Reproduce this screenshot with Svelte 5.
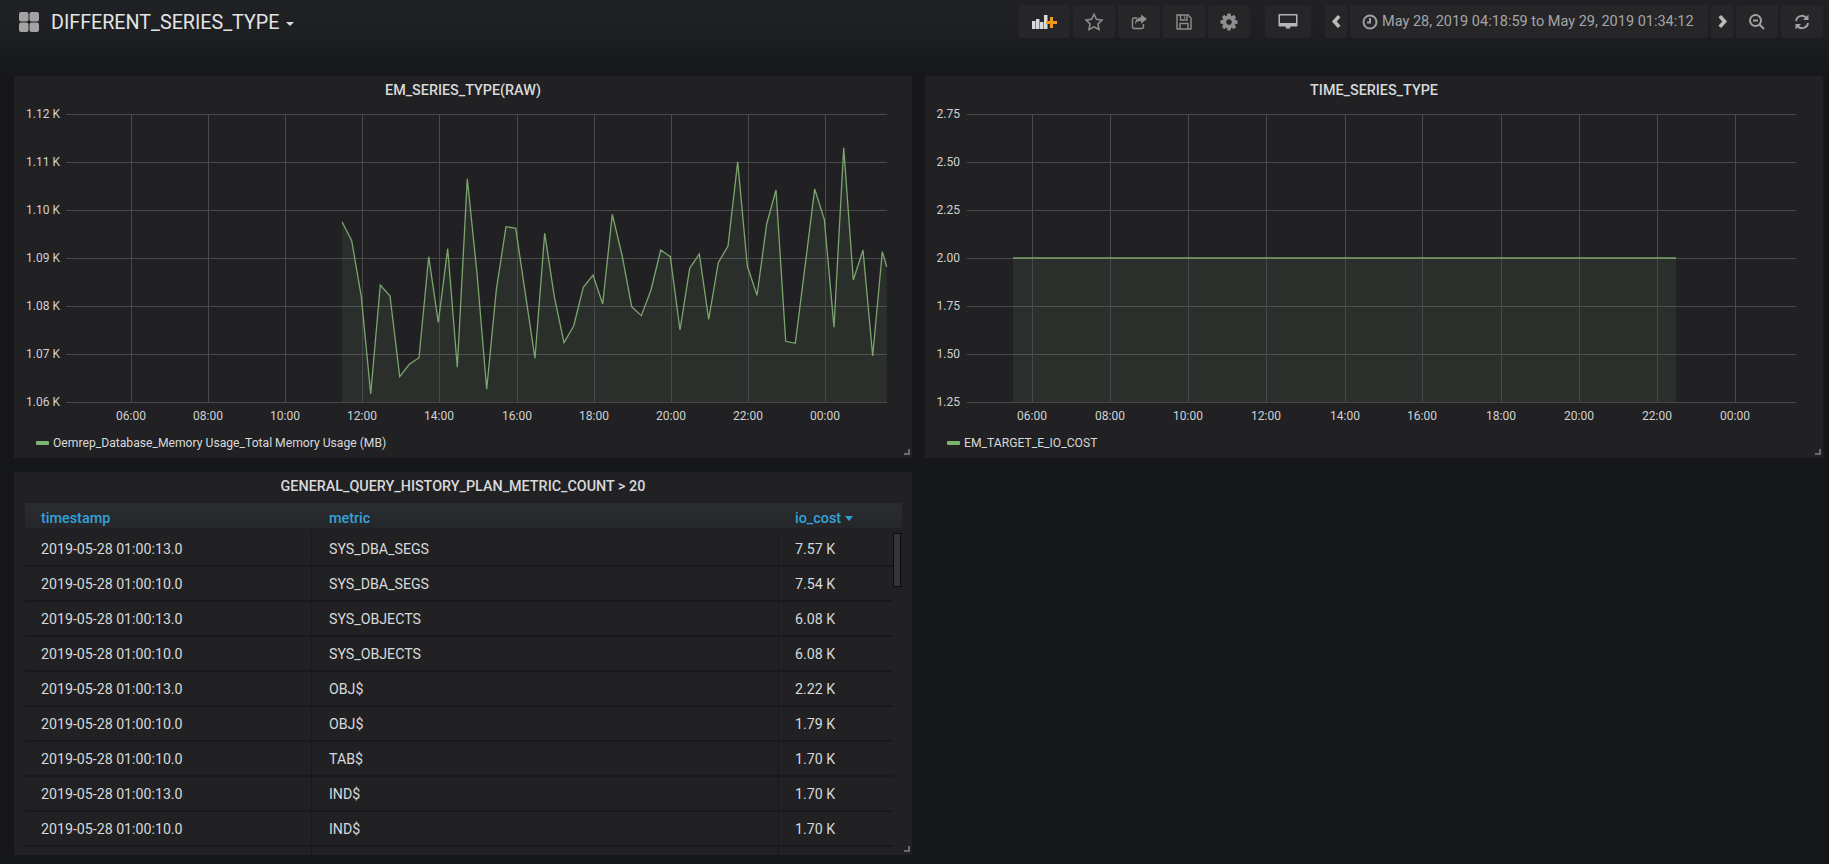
<script lang="ts">
  // chart 1 points, read off the picture as [x, y] in page pixels
  const memZoomA = [[1026,365],[1055,422],[1084,590],[1112,882],[1141,555],[1170,588],[1199,830],[1228,793],[1257,773],[1286,470],[1315,667],[1343,446],[1372,802],[1402,236]];
  const memZoomB = [[21,520],[50,868],[79,570],[108,380],[137,385],[166,580],[195,775],[224,400],[253,590],[282,728],[311,678],[340,562],[369,525],[398,612],[427,343],[456,465],[485,620],[514,647],[543,570],[572,450],[601,470],[630,690],[659,505],[688,462],[716,658],[745,488],[774,438],[803,185],[832,498],[861,586],[890,372],[918,270],[947,724],[976,730],[1005,500],[1034,267],[1063,358],[1092,682],[1121,143],[1150,540],[1179,450],[1208,768],[1237,455],[1250,500]];

  const memSeries = [
    ...memZoomA.map(([x, y]) => [x / 3, 100 + y / 3]),
    ...memZoomB.map(([x, y]) => [470 + x / 3, 100 + y / 3])
  ];

  const hours = ['06:00', '08:00', '10:00', '12:00', '14:00', '16:00', '18:00', '20:00', '22:00', '00:00'];

  const charts = [
    {
      title: 'EM_SERIES_TYPE(RAW)',
      legend: 'Oemrep_Database_Memory Usage_Total Memory Usage (MB)',
      left: 14,
      plotLeft: 66,
      plotRight: 887,
      labelX: 60,
      yLabels: ['1.12 K', '1.11 K', '1.10 K', '1.09 K', '1.08 K', '1.07 K', '1.06 K'],
      yLines: [114, 162, 210, 258, 306, 354, 402],
      xLines: [131, 208, 285, 362, 439, 517, 594, 671, 748, 825],
      points: memSeries
    },
    {
      title: 'TIME_SERIES_TYPE',
      legend: 'EM_TARGET_E_IO_COST',
      left: 925,
      plotLeft: 967,
      plotRight: 1796,
      labelX: 960,
      yLabels: ['2.75', '2.50', '2.25', '2.00', '1.75', '1.50', '1.25'],
      yLines: [114, 162, 210, 258, 306, 354, 402],
      xLines: [1032, 1110, 1188, 1266, 1345, 1422, 1501, 1579, 1657, 1735],
      points: [[1013, 258], [1676, 258]]
    }
  ];

  // svg sits 106px down the page, below the panel title
  const svgTop = 106;
  const line = (c) => c.points.map(([x, y]) => `${(x - c.left).toFixed(1)},${(y - svgTop).toFixed(1)}`).join(' ');
  const area = (c) => {
    const first = c.points[0][0] - c.left;
    const last = c.points[c.points.length - 1][0] - c.left;
    return `${first},${402 - svgTop} ${line(c)} ${last},${402 - svgTop}`;
  };

  const rows = [
    ['2019-05-28 01:00:13.0', 'SYS_DBA_SEGS', '7.57 K'],
    ['2019-05-28 01:00:10.0', 'SYS_DBA_SEGS', '7.54 K'],
    ['2019-05-28 01:00:13.0', 'SYS_OBJECTS', '6.08 K'],
    ['2019-05-28 01:00:10.0', 'SYS_OBJECTS', '6.08 K'],
    ['2019-05-28 01:00:13.0', 'OBJ$', '2.22 K'],
    ['2019-05-28 01:00:10.0', 'OBJ$', '1.79 K'],
    ['2019-05-28 01:00:10.0', 'TAB$', '1.70 K'],
    ['2019-05-28 01:00:13.0', 'IND$', '1.70 K'],
    ['2019-05-28 01:00:10.0', 'IND$', '1.70 K']
  ];
</script>

<div class="page">
  <header class="navbar">
    <div class="dash-title">
      <svg class="grid-icon" viewBox="0 0 20 20" width="20" height="20">
        <rect x="0" y="0" width="9.5" height="9.5" rx="2" />
        <rect x="10.5" y="0" width="9.5" height="9.5" rx="2" />
        <rect x="0" y="10.5" width="9.5" height="9.5" rx="2" />
        <rect x="10.5" y="10.5" width="9.5" height="9.5" rx="2" />
      </svg>
      <span>DIFFERENT_SERIES_TYPE</span>
      <i class="caret"></i>
    </div>

    <div class="actions">
      <button class="btn add">
        <svg viewBox="0 0 28 16" width="28" height="16">
          <path fill="#d8d9da" d="M1 7h3.500v8H1zM5 5h3.500v10H5zM9 8h3.500v7H9zM13 1h3.500v14H13z" />
          <path fill="#f09a24" d="M19 3h3v4h4v3h-4v4h-3v-4h-4V7h4z" />
        </svg>
      </button>
      <button class="btn">
        <svg viewBox="0 0 18 18" width="20" height="20" class="stroke">
          <path d="M9 2l2.200 4.600 5 .7-3.600 3.500.9 5L9 13.400 4.500 15.800l.9-5L1.800 7.300l5-.7z" />
        </svg>
      </button>
      <button class="btn">
        <svg viewBox="0 0 18 18" width="18" height="18">
          <path class="stroke" d="M13.500 11v3a1.500 1.500 0 0 1-1.500 1.500H4A1.500 1.500 0 0 1 2.500 14V6.500A1.500 1.500 0 0 1 4 5h3" />
          <path fill="#8e8e90" d="M11 1.500l6 4.600-6 4.600V8c-3 0-5 .8-6 3.500C5 7 7.500 4.500 11 4.300z" />
        </svg>
      </button>
      <button class="btn">
        <svg viewBox="0 0 18 18" width="18" height="18" class="stroke">
          <path d="M2 2h11l3 3v11H2z" />
          <path d="M5.500 2v5h6.500V2M9.500 3.500v2M5 16v-5.500h8V16" />
        </svg>
      </button>
      <button class="btn">
        <svg viewBox="0 0 1792 1792" width="20" height="20">
          <path fill="#8e8e90" d="M1152 896q0-106-75-181t-181-75-181 75-75 181 75 181 181 75 181-75 75-181zm512-109v222q0 12-8 23t-20 13l-185 28q-19 54-39 91 35 50 107 138 10 12 10 25t-9 23q-27 37-99 108t-94 71q-12 0-26-9l-138-108q-44 23-91 38-16 136-29 186-7 28-36 28h-222q-14 0-24.500-8.500t-11.500-21.500l-28-184q-49-16-90-37l-141 107q-10 9-25 9-14 0-25-11-126-114-165-168-7-10-7-23 0-12 8-23 15-21 51-66.500t54-70.500q-27-50-41-99l-183-27q-13-2-21-12.500t-8-23.500v-222q0-12 8-23t19-13l186-28q14-46 39-92-40-57-107-138-10-12-10-24 0-10 9-23 26-36 98.500-107.500t94.500-71.500q13 0 26 10l138 107q44-23 91-38 16-136 29-186 7-28 36-28h222q14 0 24.500 8.500t11.500 21.500l28 184q49 16 90 37l142-107q9-9 24-9 13 0 25 10 129 119 165 170 7 8 7 22 0 12-8 23-15 21-51 66.500t-54 70.500q26 50 41 98l183 28q13 2 21 12.500t8 23.500z" />
        </svg>
      </button>
      <button class="btn monitor">
        <svg viewBox="0 0 20 18" width="20" height="18">
          <path fill="#b4b5b6" fill-rule="evenodd" d="M1.500 1h17a1 1 0 0 1 1 1v10.500a1 1 0 0 1-1 1h-6L12 15.500H8l-.5-2h-6a1 1 0 0 1-1-1V2a1 1 0 0 1 1-1zM2 2.500V11h16V2.500z" />
          <path fill="#b4b5b6" d="M2 10h16v2H2z" />
        </svg>
      </button>
      <button class="btn arrow prev">
        <svg viewBox="0 0 10 14" width="11" height="15"><path class="chev" d="M7.500 2L3 7l4.500 5" /></svg>
      </button>
      <button class="btn range">
        <svg viewBox="0 0 16 16" width="16" height="16" class="stroke thick">
          <circle cx="8" cy="8" r="6.500" />
          <path d="M8 4v4.500H5" />
        </svg>
        <span>May 28, 2019 04:18:59 to May 29, 2019 01:34:12</span>
      </button>
      <button class="btn arrow next">
        <svg viewBox="0 0 10 14" width="11" height="15"><path class="chev" d="M2.500 2L7 7l-4.500 5" /></svg>
      </button>
      <button class="btn">
        <svg viewBox="0 0 18 18" width="18" height="18" class="stroke thick">
          <circle cx="7.500" cy="7.500" r="5.500" />
          <path d="M5 7.500h5M11.500 11.500L16 16" />
        </svg>
      </button>
      <button class="btn">
        <svg viewBox="0 0 18 18" width="18" height="18">
          <path class="stroke thick" d="M3 8a6 6 0 0 1 10.500-3M15 10a6 6 0 0 1-10.500 3" />
          <path fill="#a0a1a3" d="M15.500 1.500v5.500h-5.500zM2.500 16.500V11H8z" />
        </svg>
      </button>
    </div>
  </header>

  <main class="grid">
    {#each charts as c}
      <section class="panel">
        <h3>{c.title}</h3>
        <svg class="chart" width="898" height="325" viewBox="0 0 898 325">
          {#each c.yLines as y, i}
            <line class="grid-line" x1={c.plotLeft - c.left} x2={c.plotRight - c.left} y1={y - svgTop + 0.5} y2={y - svgTop + 0.5} />
            <text class="tick" x={c.labelX - c.left} y={y - svgTop + 4} text-anchor="end">{c.yLabels[i]}</text>
          {/each}
          <polygon class="fill" points={area(c)} />
          {#each c.xLines as x, i}
            <line class="grid-line" x1={x - c.left + 0.5} x2={x - c.left + 0.5} y1={114 - svgTop} y2={402 - svgTop} />
            <text class="tick" x={x - c.left} y={402 - svgTop + 18} text-anchor="middle">{hours[i]}</text>
          {/each}
          <polyline class="series" points={line(c)} />
        </svg>
        <div class="legend">
          <i class="swatch"></i>
          <span>{c.legend}</span>
        </div>
        <i class="resize"></i>
      </section>
    {/each}

    <section class="panel table-panel">
      <h3>GENERAL_QUERY_HISTORY_PLAN_METRIC_COUNT &gt; 20</h3>
      <div class="thead">
        <span class="col-a">timestamp</span>
        <span class="col-b">metric</span>
        <span class="col-c">io_cost <i class="sort"></i></span>
      </div>
      <div class="tbody">
        {#each rows as r}
          <div class="row">
            <span class="col-a">{r[0]}</span>
            <span class="col-b">{r[1]}</span>
            <span class="col-c">{r[2]}</span>
          </div>
        {/each}
        <div class="row stub">
          <span class="col-a"></span>
          <span class="col-b"></span>
          <span class="col-c"></span>
        </div>
        <i class="scrollbar"></i>
      </div>
      <i class="resize"></i>
    </section>
  </main>
</div>

<style>
  :global(body) {
    margin: 0;
    background: #161719;
  }

  .page {
    width: 1829px;
    height: 864px;
    overflow: hidden;
    font-family: Roboto, "Liberation Sans", sans-serif;
    color: #d8d9da;
    background: #161719;
  }

  .navbar {
    height: 76px;
    box-sizing: border-box;
    padding: 5px 6px 0 19px;
    display: flex;
    justify-content: space-between;
    align-items: flex-start;
    background: linear-gradient(to bottom, #202124 0, #1e1f22 30px, #17181b 66px);
  }

  .dash-title {
    display: flex;
    align-items: center;
    height: 33px;
    font-size: 19.7px;
    color: #e3e4e4;
  }

  .dash-title span {
    padding-top: 1px;
  }

  .grid-icon {
    fill: #a3a3a3;
    margin-right: 12px;
  }

  .caret {
    width: 0;
    height: 0;
    margin: 5px 0 0 7px;
    border-left: 4px solid transparent;
    border-right: 4px solid transparent;
    border-top: 4px solid #d8d9da;
  }

  .actions {
    display: flex;
    height: 33px;
    gap: 3px;
  }

  .btn {
    width: 42px;
    height: 33px;
    padding: 0;
    display: flex;
    align-items: center;
    justify-content: center;
    border: 0;
    border-radius: 2px;
    background: #262628;
    color: #a4a5a7;
    font: inherit;
    font-size: 14.5px;
  }

  .add {
    width: 51px;
  }

  .monitor {
    width: 46px;
    margin: 0 11px 0 12px;
  }

  .arrow {
    width: 22px;
  }

  .range {
    width: 358px;
    box-sizing: border-box;
    justify-content: flex-start;
    padding-left: 12px;
    gap: 4px;
  }

  .stroke {
    fill: none;
    stroke: #8e8e90;
    stroke-width: 1.4;
  }

  path.stroke {
    fill: none;
  }

  .thick {
    stroke: #a0a1a3;
    stroke-width: 2;
  }

  .chev {
    fill: none;
    stroke: #b9babb;
    stroke-width: 3.4;
  }

  .grid {
    display: grid;
    grid-template-columns: 898px 898px;
    grid-template-rows: 382px 383px;
    gap: 14px 13px;
    padding-left: 14px;
  }

  .panel {
    position: relative;
    background: #212124;
    overflow: hidden;
  }

  h3 {
    margin: 0;
    height: 30px;
    line-height: 29px;
    text-align: center;
    font-size: 14.35px;
    font-weight: 500;
    color: #d8d9da;
  }

  .chart {
    display: block;
  }

  .grid-line {
    stroke: #49494c;
    stroke-width: 1;
  }

  .tick {
    font-size: 12px;
    fill: #d0d1d2;
  }

  .fill {
    fill: rgba(126, 178, 109, 0.1);
  }

  .series {
    fill: none;
    stroke: #7ba56c;
    stroke-width: 1.3;
  }

  .legend {
    height: 27px;
    display: flex;
    align-items: flex-start;
    padding-left: 22px;
    font-size: 12.15px;
    line-height: 24px;
    color: #d8d9da;
  }

  .swatch {
    width: 13px;
    height: 4px;
    margin: 10px 4px 0 0;
    border-radius: 1px;
    background: #7eb26d;
  }

  .resize {
    position: absolute;
    right: 2px;
    bottom: 3px;
    width: 4px;
    height: 4px;
    border-right: 2px solid #6a6a6c;
    border-bottom: 2px solid #6a6a6c;
  }

  .table-panel h3 {
    height: 31px;
  }

  .thead {
    margin: 0 10px 0 11px;
    height: 25px;
    box-sizing: border-box;
    padding-top: 5px;
    display: flex;
    align-items: center;
    font-size: 14.4px;
    font-weight: 500;
    color: #33a2d6;
    background: linear-gradient(to bottom, #2b2c30, #252629);
  }

  .col-a {
    width: 287px;
    padding-left: 16px;
    box-sizing: border-box;
  }

  .col-b {
    width: 467px;
    padding-left: 17px;
    box-sizing: border-box;
  }

  .col-c {
    padding-left: 16px;
  }

  .sort {
    display: inline-block;
    vertical-align: 2px;
    border-left: 4px solid transparent;
    border-right: 4px solid transparent;
    border-top: 5px solid #33a2d6;
  }

  .tbody {
    position: relative;
    margin: 4px 10px 0 11px;
    height: 323px;
    overflow: hidden;
    font-size: 14.2px;
  }

  .row {
    width: 868px;
    height: 35px;
    box-sizing: border-box;
    display: flex;
    align-items: center;
    border-bottom: 2px solid #18191b;
  }

  .row .col-a,
  .row .col-b {
    height: 100%;
    display: flex;
    align-items: center;
    border-right: 1px solid #18191b;
  }

  .row.stub .col-c {
    height: 100%;
  }

  .scrollbar {
    position: absolute;
    top: 1px;
    right: 1px;
    width: 6px;
    height: 52px;
    border: 1px solid #0c0c0e;
    background: #34343b;
  }
</style>
